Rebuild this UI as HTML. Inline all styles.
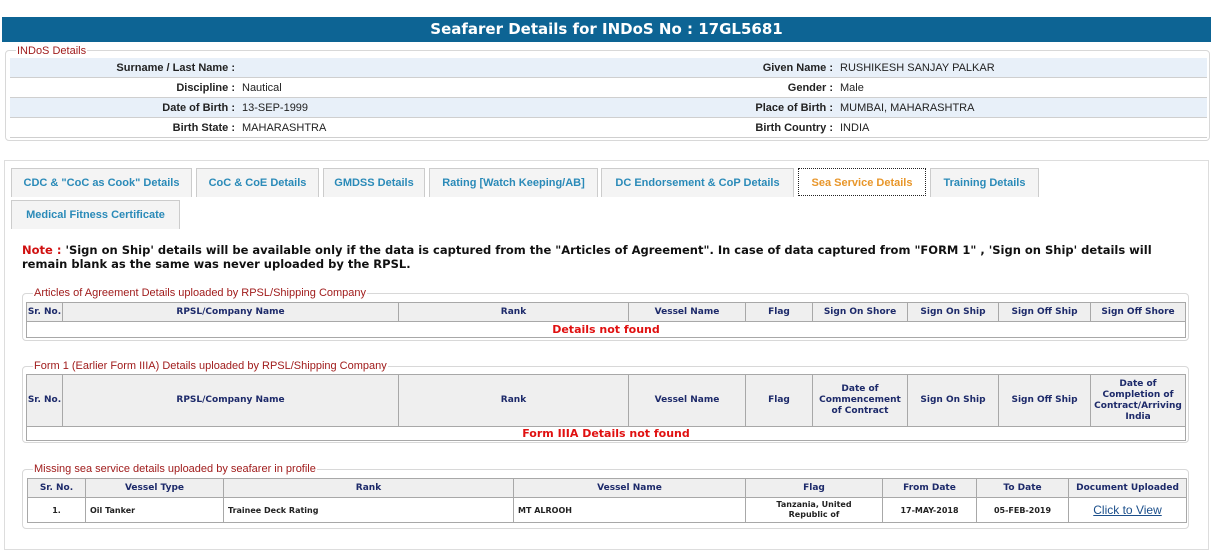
<!DOCTYPE html>
<html><head><meta charset="utf-8"><style>
*{box-sizing:border-box;margin:0;padding:0}
body{width:1224px;height:538px;background:#fff;position:relative;overflow:hidden;font-family:"Liberation Sans",Arial,sans-serif}
.a{position:absolute}
.title{left:2px;top:17px;width:1209px;height:25px;background:#0d6494;color:#fff;font:bold 15px "DejaVu Sans",sans-serif;text-align:center;line-height:25px}
.fs{position:absolute;border:1px solid #d8d8d8;border-radius:4px}
.lg{position:absolute;background:#fff;color:#a01c1c;font-size:11px;padding:0 1px;line-height:12px}
.row{position:absolute;left:10px;width:1197px;height:20px;border-bottom:1px solid #cfcfcf;font-size:11px;line-height:20px;color:#222}
.row.b{background:#e8f0f9}
.row span{position:absolute}
.l{text-align:right}
.tab{position:absolute;height:29px;border:1px solid #ccc;border-bottom:none;background:#f4f4f4;color:#2a8ab8;font-size:11px;font-weight:bold;text-align:center;line-height:28px}
table{position:absolute;border-collapse:collapse;table-layout:fixed;font-family:"DejaVu Sans",Verdana,sans-serif}
th{background:#efefef;color:#1d2a6a;font-size:9px;font-weight:bold;border:1px solid #a8a8a8;line-height:11px}
td{border:1px solid #a8a8a8;font-size:8px;font-weight:bold;color:#222;height:25px}
.nf{color:#e01010;font-size:11px;text-align:center;font-weight:bold;padding:0}
</style></head><body>
<div class="a title">Seafarer Details for INDoS No : 17GL5681</div>
<div class="fs" style="left:5px;top:50px;width:1205px;height:91px"></div>
<div class="lg" style="left:16px;top:45px">INDoS Details</div>
<div class="row b" style="top:58px"><span class="l" style="right:972px;font-weight:bold">Surname / Last Name :</span><span class="l" style="right:374px;font-weight:bold">Given Name :</span><span style="left:830px">RUSHIKESH SANJAY PALKAR</span></div>
<div class="row" style="top:78px"><span class="l" style="right:972px;font-weight:bold">Discipline :</span><span style="left:232px">Nautical</span><span class="l" style="right:374px;font-weight:bold">Gender :</span><span style="left:830px">Male</span></div>
<div class="row b" style="top:98px"><span class="l" style="right:972px;font-weight:bold">Date of Birth :</span><span style="left:232px">13-SEP-1999</span><span class="l" style="right:374px;font-weight:bold">Place of Birth :</span><span style="left:830px">MUMBAI, MAHARASHTRA</span></div>
<div class="row" style="top:118px"><span class="l" style="right:972px;font-weight:bold">Birth State :</span><span style="left:232px">MAHARASHTRA</span><span class="l" style="right:374px;font-weight:bold">Birth Country :</span><span style="left:830px">INDIA</span></div>

<div class="a" style="left:4px;top:160px;width:1205px;height:390px;border:1px solid #ddd"></div>
<div class="tab" style="left:11px;top:168px;width:181px">CDC &amp; "CoC as Cook" Details</div>
<div class="tab" style="left:196px;top:168px;width:123px">CoC &amp; CoE Details</div>
<div class="tab" style="left:323px;top:168px;width:102px">GMDSS Details</div>
<div class="tab" style="left:429px;top:168px;width:169px">Rating [Watch Keeping/AB]</div>
<div class="tab" style="left:601px;top:168px;width:193px">DC Endorsement &amp; CoP Details</div>
<div class="tab" style="left:798px;top:168px;width:128px;background:#fff;color:#e8962a;border:1px dotted #222;height:28px">Sea Service Details</div>
<div class="tab" style="left:930px;top:168px;width:109px">Training Details</div>
<div class="tab" style="left:11px;top:200px;width:169px">Medical Fitness Certificate</div>

<div class="a" style="left:22px;top:243px;width:1170px;font:bold 11.5px/14px 'DejaVu Sans',Verdana,sans-serif;color:#111"><span style="color:#d01010">Note :</span> 'Sign on Ship' details will be available only if the data is captured from the "Articles of Agreement". In case of data captured from "FORM 1" , 'Sign on Ship' details will remain blank as the same was never uploaded by the RPSL.</div>

<div class="fs" style="left:22px;top:293px;width:1167px;height:48px"></div>
<div class="lg" style="left:33px;top:287px">Articles of Agreement Details uploaded by RPSL/Shipping Company</div>
<table style="left:26px;top:302px;width:1159px">
<colgroup><col style="width:36px"><col style="width:336px"><col style="width:230px"><col style="width:117px"><col style="width:67px"><col style="width:95px"><col style="width:91px"><col style="width:92px"><col style="width:95px"></colgroup>
<tr style="height:19px"><th>Sr. No.</th><th>RPSL/Company Name</th><th>Rank</th><th>Vessel Name</th><th>Flag</th><th>Sign On Shore</th><th>Sign On Ship</th><th>Sign Off Ship</th><th>Sign Off Shore</th></tr>
<tr><td colspan="9" class="nf" style="height:16px">Details not found</td></tr></table>

<div class="fs" style="left:22px;top:366px;width:1167px;height:77px"></div>
<div class="lg" style="left:33px;top:360px">Form 1 (Earlier Form IIIA) Details uploaded by RPSL/Shipping Company</div>
<table style="left:26px;top:374px;width:1159px">
<colgroup><col style="width:36px"><col style="width:336px"><col style="width:230px"><col style="width:117px"><col style="width:67px"><col style="width:95px"><col style="width:91px"><col style="width:92px"><col style="width:95px"></colgroup>
<tr style="height:52px"><th>Sr. No.</th><th>RPSL/Company Name</th><th>Rank</th><th>Vessel Name</th><th>Flag</th><th>Date of Commencement of Contract</th><th>Sign On Ship</th><th>Sign Off Ship</th><th>Date of Completion of Contract/Arriving India</th></tr>
<tr><td colspan="9" class="nf" style="height:14px">Form IIIA Details not found</td></tr></table>

<div class="fs" style="left:22px;top:469px;width:1167px;height:60px"></div>
<div class="lg" style="left:33px;top:463px">Missing sea service details uploaded by seafarer in profile</div>
<table style="left:27px;top:478px;width:1159px">
<colgroup><col style="width:58px"><col style="width:138px"><col style="width:290px"><col style="width:232px"><col style="width:137px"><col style="width:94px"><col style="width:92px"><col style="width:118px"></colgroup>
<tr style="height:19px"><th>Sr. No.</th><th>Vessel Type</th><th>Rank</th><th>Vessel Name</th><th>Flag</th><th>From Date</th><th>To Date</th><th>Document Uploaded</th></tr>
<tr><td style="text-align:center">1.</td><td style="padding-left:4px">Oil Tanker</td><td style="padding-left:4px">Trainee Deck Rating</td><td style="padding-left:4px">MT ALROOH</td><td style="text-align:center;line-height:10px;padding:0 12px">Tanzania, United Republic of</td><td style="text-align:center">17-MAY-2018</td><td style="text-align:center">05-FEB-2019</td><td style="text-align:center;font:12px 'Liberation Sans',Arial,sans-serif;color:#1a4e8a;text-decoration:underline">Click to View</td></tr></table>
</body></html>
